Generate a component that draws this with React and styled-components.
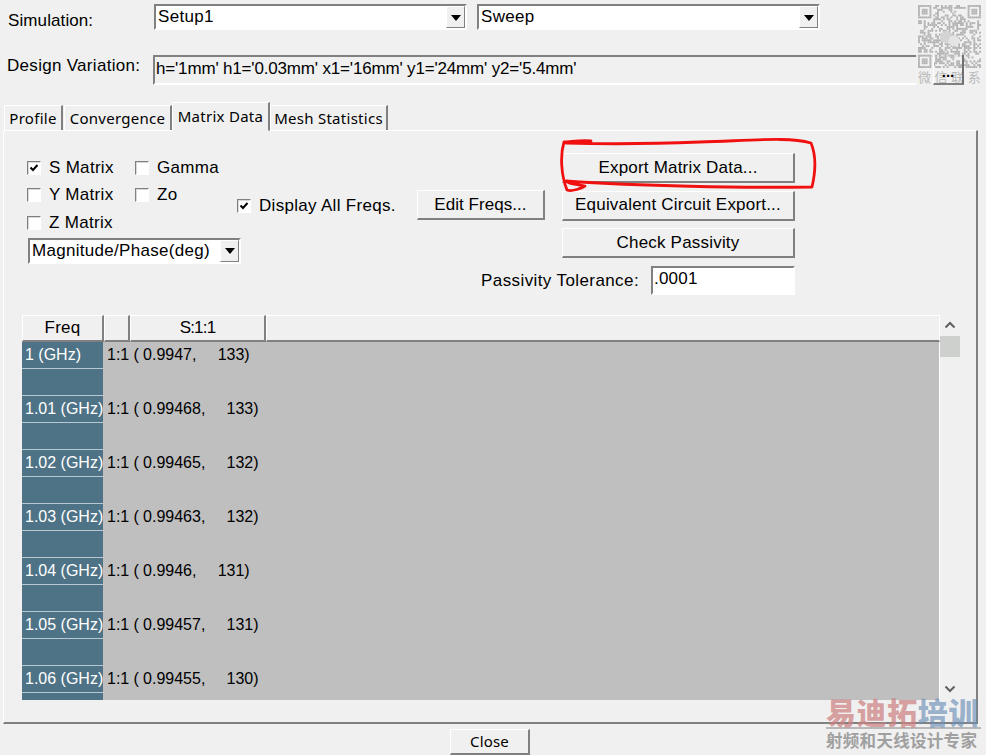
import React from "react";
import styled, { createGlobalStyle } from "styled-components";

const Global = createGlobalStyle`
  html, body { margin: 0; padding: 0; background: #f0f0f0; }
  body { font-family: "Liberation Sans", Arial, sans-serif; color: #000; }
  #root { width: 986px; height: 755px; overflow: hidden; }
`;

const Page = styled.div`
  position: relative;
  width: 986px;
  height: 755px;
  overflow: hidden;
  background: #f0f0f0;
  display: flex;
  flex-direction: column;
  font-size: 17px;
  letter-spacing: 0.3px;
`;

const TopRow = styled.div`
  display: flex;
  align-items: flex-start;
  padding: 4px 0 0 8px;
  height: 55px;
  flex: none;
  box-sizing: border-box;
`;
const VariationRow = styled.div`
  display: flex;
  align-items: flex-start;
  padding-left: 7px;
  height: 46px;
  flex: none;
  box-sizing: border-box;
`;
const Label = styled.div`
  width: ${(p) => p.$w}px;
  flex: none;
  line-height: 20px;
  padding-top: ${(p) => p.$top}px;
  letter-spacing: ${(p) => p.$ls ?? 0.3}px;
`;
const Combo = styled.div`
  width: ${(p) => p.$w}px;
  height: 26px;
  margin-right: ${(p) => p.$mr || 0}px;
  flex: none;
  box-sizing: border-box;
  background: #fff;
  border: 2px solid;
  border-color: #808080 #fff #fff #808080;
  display: flex;
  align-items: center;
  justify-content: space-between;
  padding-left: 2px;
  line-height: 20px;
`;
const ComboText = styled.span`
  position: relative;
  top: ${(p) => p.$top ?? 0}px;
`;
const Arrow = styled.div`
  width: 19px;
  height: 22px;
  box-sizing: border-box;
  background: #f0f0f0;
  border: 1px solid;
  border-color: #fff #808080 #808080 #fff;
  display: flex;
  align-items: center;
  justify-content: center;
  &::after {
    content: "";
    margin-top: 1px;
    border-left: 5px solid transparent;
    border-right: 5px solid transparent;
    border-top: 6px solid #000;
  }
`;
const VariationField = styled.div`
  flex: none;
  width: 810px;
  height: 30px;
  box-sizing: border-box;
  border-top: 2px solid #808080;
  border-left: 2px solid #808080;
  border-bottom: 2px solid #fff;
  padding: 2px 0 0 1px;
  line-height: 20px;
  white-space: nowrap;
  letter-spacing: -0.17px;
`;

const Tabs = styled.div`
  display: flex;
  align-items: flex-end;
  height: 29px;
  flex: none;
  padding-left: 4px;
  font-family: "Noto Sans", sans-serif;
  font-size: 15px;
  letter-spacing: 0.27px;
`;
const Tab = styled.div`
  box-sizing: border-box;
  width: ${(p) => p.$w}px;
  margin-right: ${(p) => p.$mr || 0}px;
  height: 25px;
  background: #f0f0f0;
  border-top: 1px solid #fff;
  border-left: 1px solid #fff;
  border-right: 2px solid #808080;
  line-height: 25px;
  text-align: center;
  white-space: nowrap;
  position: relative;
  z-index: 1;
  ${(p) => p.$active && "margin-bottom: -1px; height: 29px; line-height: 26px; border-bottom: 1px solid #f0f0f0;"}
`;

const Panel = styled.div`
  margin-left: 3px;
  width: 975px;
  height: 594px;
  flex: none;
  box-sizing: border-box;
  border-top: 1px solid #fff;
  border-left: 1px solid #fff;
  border-right: 2px solid #808080;
  border-bottom: 2px solid #808080;
  padding: 23px 0 0 18px;
  display: flex;
  flex-direction: column;
`;
const Controls = styled.div`
  height: 161px;
  flex: none;
  display: flex;
`;
const LeftCol = styled.div`
  width: 215px;
  padding-left: 5px;
  box-sizing: border-box;
  flex: none;
`;
const CheckGrid = styled.div`
  display: grid;
  grid-template-columns: 108px auto;
  grid-auto-rows: 27.5px;
  align-items: center;
`;
const Check = styled.label`
  display: flex;
  align-items: center;
  gap: 8px;
  white-space: nowrap;
`;
const Box = styled.span`
  width: 14px;
  height: 14px;
  box-sizing: border-box;
  flex: none;
  background: #fff;
  border: 1px solid;
  border-color: #808080 #fff #fff #808080;
  box-shadow: inset 1px 1px 0 #d8d8d8;
  display: flex;
  align-items: center;
  justify-content: center;
`;
const LowComboWrap = styled.div`
  margin: 1px 0 0 1px;
`;
const MidCol = styled.div`
  width: 180px;
  flex: none;
  padding-top: 42px;
  box-sizing: border-box;
`;
const FreqsCol = styled.div`
  width: 145px;
  flex: none;
  padding-top: 36px;
  box-sizing: border-box;
`;
const RightCol = styled.div`
  width: 250px;
  flex: none;
  display: flex;
  flex-direction: column;
  align-items: flex-end;
  gap: 7.5px;
  margin-top: -1px;
  padding-right: 17px;
  box-sizing: border-box;
`;
const Button = styled.div`
  box-sizing: border-box;
  width: ${(p) => p.$w}px;
  height: ${(p) => p.$h || 30}px;
  background: #f0f0f0;
  border-style: solid;
  border-width: 1px 2px 2px 1px;
  border-color: #fff #808080 #808080 #fff;
  display: flex;
  align-items: center;
  justify-content: center;
  white-space: nowrap;
  letter-spacing: ${(p) => p.$ls ?? 0.2}px;
`;
const CloseButton = styled(Button)`
  padding-bottom: 2px;
`;
const ToleranceRow = styled.div`
  display: flex;
  align-items: center;
  gap: 12px;
  white-space: nowrap;
  letter-spacing: 0.4px;
`;
const ToleranceText = styled.span`
  position: relative;
  top: 1px;
`;
const ToleranceInput = styled.div`
  box-sizing: border-box;
  width: 144px;
  height: 29px;
  background: #fff;
  border: 2px solid;
  border-color: #808080 #fff #fff #808080;
  padding: 1px 0 0 1px;
  line-height: 20px;
  letter-spacing: 0.2px;
`;

const TableArea = styled.div`
  display: flex;
  flex: none;
`;
const Table = styled.div`
  width: 918px;
  height: 385px;
  overflow: hidden;
  flex: none;
`;
const HeaderRow = styled.div`
  display: grid;
  grid-template-columns: 82px 26px 136px 1fr;
  height: 27px;
`;
const HeaderCell = styled.div`
  box-sizing: border-box;
  background: #f0f0f0;
  border-style: solid;
  border-width: 1px 2px 2px 1px;
  border-color: #fff #808080 #808080 #fff;
  text-align: center;
  line-height: 23px;
  font-size: 17px;
  letter-spacing: ${(p) => (p.$tight ? -0.8 : 0.2)}px;
  &:last-child { border-right: 1px solid #fff; }
`;
const Row = styled.div`
  display: grid;
  grid-template-columns: 81px 1fr;
  height: 27px;
  line-height: 26px;
  white-space: pre;
  font-size: 16px;
  letter-spacing: 0;
`;
const FreqCell = styled.div`
  background: #4f7386;
  color: #fff;
  box-sizing: border-box;
  border-bottom: 1px solid #b8c8d0;
  padding-left: 3px;
`;
const DataCell = styled.div`
  background: #bfbfbf;
  padding-left: 4px;
  word-spacing: -0.2px;
  border-right: 1px solid #fff;
`;
const Scroll = styled.div`
  width: 20px;
  flex: none;
  height: 385px;
  position: relative;
  display: flex;
  flex-direction: column;
  align-items: center;
  justify-content: space-between;
  padding: 6px 0 7px;
  box-sizing: border-box;
`;
const ScrollThumb = styled.div`
  position: absolute;
  top: 21px;
  left: 0;
  width: 20px;
  height: 21px;
  background: #cdd0cc;
`;
const Footer = styled.div`
  flex: 1;
  display: flex;
  justify-content: center;
  padding-top: 5px;
  padding-right: 6px;
  font-family: "Noto Sans", sans-serif;
  font-size: 15px;
`;

const EllipsisBtn = styled.div`
  position: absolute;
  left: 933px;
  top: 55px;
  width: 31px;
  height: 30px;
  box-sizing: border-box;
  border-right: 2px solid #707070;
  border-bottom: 2px solid #808080;
  border-left: 1px solid #fff;
  text-align: center;
  font-size: 15px;
  line-height: 34px;
  font-weight: bold;
  letter-spacing: 0;
`;
const QrBlock = styled.div`
  position: absolute;
  left: 916px;
  top: 3px;
  width: 67px;
  height: 82px;
  background: rgba(240, 240, 240, 0.88);
`;
const QrCaption = styled.div`
  font-family: "Noto Sans CJK SC", sans-serif;
  color: #b9b9b9;
  font-size: 13px;
  line-height: 16px;
  letter-spacing: 3.6px;
  padding-left: 2px;
  white-space: nowrap;
`;
const Annotation = styled.svg`
  position: absolute;
  left: 555px;
  top: 135px;
`;
const Watermark = styled.div`
  position: absolute;
  left: 826px;
  top: 696px;
  width: 155px;
`;
const BrandLine = styled.div`
  font-family: "Noto Sans CJK SC", sans-serif;
  font-weight: 900;
  font-size: 30px;
  line-height: 30px;
  letter-spacing: 0.6px;
  white-space: nowrap;
  border-bottom: 2px solid rgba(170, 170, 170, 0.8);
  padding-bottom: 1px;
`;
const BrandRed = styled.span`
  color: rgba(205, 130, 130, 0.72);
`;
const BrandBlue = styled.span`
  color: rgba(110, 145, 185, 0.68);
`;
const BrandSub = styled.div`
  font-family: "Noto Sans CJK SC", sans-serif;
  font-weight: 700;
  font-size: 16.5px;
  line-height: 22px;
  color: #a0a0a0;
  white-space: nowrap;
  letter-spacing: 0.3px;
`;

const Tick = () => (
  <svg width="10" height="10" viewBox="0 0 10 10">
    <path d="M1.5 4.5 L4 7 L8.5 2" fill="none" stroke="#000" strokeWidth="2" />
  </svg>
);

const QrCode = () => {
  const n = 33;
  const cell = 63 / n;
  const cells = [];
  const finder = (x, y) =>
    x >= 0 && y >= 0 && x < 7 && y < 7 && (x === 0 || y === 0 || x === 6 || y === 6 || (x > 1 && x < 5 && y > 1 && y < 5));
  const inFinder = (x, y) => (x < 8 && y < 8) || (x >= n - 8 && y < 8) || (x < 8 && y >= n - 8);
  let seed = 12345;
  for (let y = 0; y < n; y++) {
    for (let x = 0; x < n; x++) {
      seed = (seed * 1103515245 + 12345) & 0x7fffffff;
      let on;
      if (inFinder(x, y)) {
        on = finder(x, y) || finder(x - (n - 7), y) || finder(x, y - (n - 7));
      } else {
        on = (seed >> 16) % 100 < 50;
      }
      if (on) cells.push(<rect key={`${x}-${y}`} x={x * cell + 2} y={y * cell + 2} width={cell} height={cell} />);
    }
  }
  return (
    <svg width="67" height="66" viewBox="0 0 67 66" style={{ display: "block" }}>
      <g fill="#b2b2b2">{cells}</g>
      <circle cx="30" cy="34" r="6" fill="#d4d4d4" />
      <circle cx="38" cy="38" r="5.5" fill="#e4e4e4" />
    </svg>
  );
};

const rows = [
  ["1 (GHz)", "1:1 ( 0.9947,     133)"],
  ["1.01 (GHz)", "1:1 ( 0.99468,     133)"],
  ["1.02 (GHz)", "1:1 ( 0.99465,     132)"],
  ["1.03 (GHz)", "1:1 ( 0.99463,     132)"],
  ["1.04 (GHz)", "1:1 ( 0.9946,     131)"],
  ["1.05 (GHz)", "1:1 ( 0.99457,     131)"],
  ["1.06 (GHz)", "1:1 ( 0.99455,     130)"],
];

export default function App() {
  return (
    <Page>
      <Global />
      <TopRow>
        <Label $w={146} $top={7} $ls={0.1}>Simulation:</Label>
        <Combo $w={313} $mr={10}>
          <ComboText>Setup1</ComboText>
          <Arrow />
        </Combo>
        <Combo $w={343}>
          <ComboText>Sweep</ComboText>
          <Arrow />
        </Combo>
      </TopRow>
      <VariationRow>
        <Label $w={146} $top={1}>Design Variation:</Label>
        <VariationField>h='1mm' h1='0.03mm' x1='16mm' y1='24mm' y2='5.4mm'</VariationField>
      </VariationRow>
      <Tabs>
        <Tab $w={59} $mr={1}>Profile</Tab>
        <Tab $w={108}>Convergence</Tab>
        <Tab $w={98} $active>Matrix Data</Tab>
        <Tab $w={118}>Mesh Statistics</Tab>
      </Tabs>
      <Panel>
        <Controls>
          <LeftCol>
            <CheckGrid>
              <Check><Box><Tick /></Box>S Matrix</Check>
              <Check><Box />Gamma</Check>
              <Check><Box />Y Matrix</Check>
              <Check><Box />Zo</Check>
              <Check><Box />Z Matrix</Check>
            </CheckGrid>
            <LowComboWrap>
              <Combo $w={213}>
                <ComboText>Magnitude/Phase(deg)</ComboText>
                <Arrow />
              </Combo>
            </LowComboWrap>
          </LeftCol>
          <MidCol>
            <Check><Box><Tick /></Box>Display All Freqs.</Check>
          </MidCol>
          <FreqsCol>
            <Button $w={128} $ls={0.05}>Edit Freqs...</Button>
          </FreqsCol>
          <RightCol>
            <Button $w={233}>Export Matrix Data...</Button>
            <Button $w={233}>Equivalent Circuit Export...</Button>
            <Button $w={233}>Check Passivity</Button>
            <ToleranceRow>
              <ToleranceText>Passivity Tolerance:</ToleranceText>
              <ToleranceInput>.0001</ToleranceInput>
            </ToleranceRow>
          </RightCol>
        </Controls>
        <TableArea>
          <Table>
            <HeaderRow>
              <HeaderCell>Freq</HeaderCell>
              <HeaderCell />
              <HeaderCell $tight>S:1:1</HeaderCell>
              <HeaderCell />
            </HeaderRow>
            {rows.map(([f, d]) => (
              <React.Fragment key={f}>
                <Row>
                  <FreqCell>{f}</FreqCell>
                  <DataCell>{d}</DataCell>
                </Row>
                <Row>
                  <FreqCell />
                  <DataCell />
                </Row>
              </React.Fragment>
            ))}
          </Table>
          <Scroll>
            <svg width="12" height="8" viewBox="0 0 12 8">
              <path d="M1.5 6.5 L6 2 L10.5 6.5" fill="none" stroke="#606060" strokeWidth="2" />
            </svg>
            <ScrollThumb />
            <svg width="12" height="8" viewBox="0 0 12 8">
              <path d="M1.5 1.5 L6 6 L10.5 1.5" fill="none" stroke="#606060" strokeWidth="2" />
            </svg>
          </Scroll>
        </TableArea>
      </Panel>
      <Footer>
        <CloseButton $w={80} $h={26}>Close</CloseButton>
      </Footer>

      <QrBlock>
        <QrCode />
        <QrCaption>微信联系</QrCaption>
      </QrBlock>
      <EllipsisBtn>...</EllipsisBtn>
      <Annotation width="270" height="65" viewBox="555 135 270 65">
        <path
          d="M591 141 C580 140 570 142 564 142 C560 155 561 175 567 190 C572 192 582 188 585 186 C575 184 568 184 566 181 C640 186 740 188 812 187 C816 170 816 155 811 143 C790 137 760 140 700 142 C650 144 600 144 566 143"
          fill="none"
          stroke="#f01010"
          strokeWidth="2.8"
          strokeLinecap="round"
          strokeLinejoin="round"
        />
      </Annotation>
      <Watermark>
        <BrandLine>
          <BrandRed>易迪拓</BrandRed>
          <BrandBlue>培训</BrandBlue>
        </BrandLine>
        <BrandSub>射频和天线设计专家</BrandSub>
      </Watermark>
    </Page>
  );
}
